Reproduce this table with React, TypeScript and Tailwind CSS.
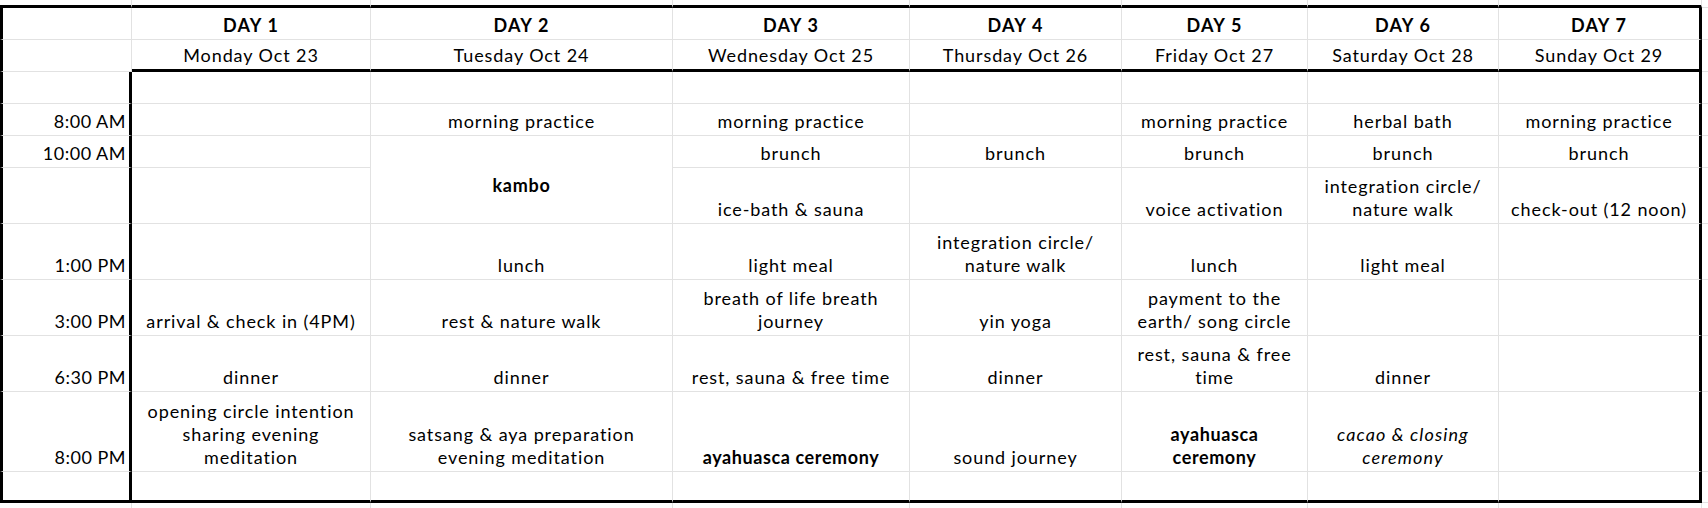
import React from 'react';

type Entry = { lines: string[]; look?: 'bold' | 'italic'; span?: boolean } | null | 'covered';

const days = [
    ['DAY 1', 'Monday Oct 23'],
    ['DAY 2', 'Tuesday Oct 24'],
    ['DAY 3', 'Wednesday Oct 25'],
    ['DAY 4', 'Thursday Oct 26'],
    ['DAY 5', 'Friday Oct 27'],
    ['DAY 6', 'Saturday Oct 28'],
    ['DAY 7', 'Sunday Oct 29'],
];

const t = (...lines: string[]): Entry => ({ lines });
const b = (...lines: string[]): Entry => ({ lines, look: 'bold' });
const i = (...lines: string[]): Entry => ({ lines, look: 'italic' });

// schedule rows below the header, time label first
const schedule: { time: string; cells: Entry[] }[] = [
    { time: '', cells: [null, null, null, null, null, null, null] },
    { time: '8:00 AM', cells: [null, t('morning practice'), t('morning practice'), null, t('morning practice'), t('herbal bath'), t('morning practice')] },
    { time: '10:00 AM', cells: [null, { lines: ['kambo'], look: 'bold', span: true }, t('brunch'), t('brunch'), t('brunch'), t('brunch'), t('brunch')] },
    { time: '', cells: [null, 'covered', t('ice-bath & sauna'), null, t('voice activation'), t('integration circle/', 'nature walk'), t('check-out (12 noon)')] },
    { time: '1:00 PM', cells: [null, t('lunch'), t('light meal'), t('integration circle/', 'nature walk'), t('lunch'), t('light meal'), null] },
    { time: '3:00 PM', cells: [t('arrival & check in (4PM)'), t('rest & nature walk'), t('breath of life breath', 'journey'), t('yin yoga'), t('payment to the', 'earth/ song circle'), null, null] },
    { time: '6:30 PM', cells: [t('dinner'), t('dinner'), t('rest, sauna & free time'), t('dinner'), t('rest, sauna & free', 'time'), t('dinner'), null] },
    { time: '8:00 PM', cells: [t('opening circle intention', 'sharing evening', 'meditation'), t('satsang & aya preparation', 'evening meditation'), b('ayahuasca ceremony'), t('sound journey'), b('ayahuasca', 'ceremony'), i('cacao & closing', 'ceremony'), null] },
    { time: '', cells: [null, null, null, null, null, null, null] },
];

const LAST_ROW = schedule.length + 2; // index of the final bordered row (rows: 0 top strip, 1-2 header)

const borders = (r: number, c: number) => {
    const parts: string[] = [];
    const total = LAST_ROW + 1; // tail strip index
    // right edge
    if (c === 8) {
        // no right border on the tail column
    } else if (r >= 1 && r <= LAST_ROW && ((c === 0 && r >= 3) || c === 7)) {
        parts.push('border-r-[3px] border-r-black');
    } else {
        parts.push('border-r border-r-[#e2e2e2]');
    }
    // bottom edge
    if (r === total) {
        // tail strip
    } else if (c <= 7 && (r === 0 || r === LAST_ROW || (r === 2 && c >= 1))) {
        parts.push('border-b-[3px] border-b-black');
    } else {
        parts.push('border-b border-b-[#e2e2e2]');
    }
    // left edge
    if (c === 0 && r >= 1 && r <= LAST_ROW) parts.push('border-l-[3px] border-l-black');
    return parts.join(' ');
};

const Lines = ({ lines }: { lines: string[] }) => (
    <>
        {lines.map(l => (
            <span key={l} className="block whitespace-nowrap">{l}</span>
        ))}
    </>
);

export default function App() {
    const cells: React.ReactNode[] = [];
    const total = LAST_ROW + 1;

    for (let r = 0; r <= total; r++) {
        for (let c = 0; c <= 8; c++) {
            const key = `${r}-${c}`;
            const base = `flex flex-col justify-end pb-[2px] ${borders(r, c)}`;

            if (r === 0 || r === total || c === 8) {
                cells.push(<div key={key} className={borders(r, c)} />);
                continue;
            }

            if (r === 1 || r === 2) {
                const label = c === 0 ? '' : days[c - 1][r - 1];
                cells.push(
                    <div key={key} className={`${base} text-center ${r === 1 ? 'font-bold tracking-[1.2px]' : ''}`}>
                        {label && <span className="whitespace-nowrap">{label}</span>}
                    </div>
                );
                continue;
            }

            const row = schedule[r - 3];
            if (c === 0) {
                cells.push(
                    <div key={key} className={`${base} text-right pr-[3px] tracking-[0.5px]`}>
                        {row.time && <span className="whitespace-nowrap">{row.time}</span>}
                    </div>
                );
                continue;
            }

            const entry = row.cells[c - 1];
            if (entry === 'covered') continue;
            if (entry && entry.span) {
                cells.push(
                    <div key={key} className={`row-span-2 flex flex-col justify-center pt-[11px] text-center font-bold tracking-[0.7px] ${borders(r + 1, c)}`}>
                        <Lines lines={entry.lines} />
                    </div>
                );
                continue;
            }
            const look = entry?.look === 'bold' ? 'font-bold tracking-[0.6px]' : entry?.look === 'italic' ? 'italic tracking-[1.1px]' : '';
            cells.push(
                <div key={key} className={`${base} text-center ${look}`}>
                    {entry && <Lines lines={entry.lines} />}
                </div>
            );
        }
    }

    return (
        <div className="w-[1708px] h-[508px] overflow-hidden bg-white text-black font-['Lato','Liberation_Sans',sans-serif] text-[18px] leading-[23px] tracking-[0.9px]">
            <div className="grid grid-cols-[132px_239px_302px_237px_212px_186px_191px_203px_6px] grid-rows-[8px_32px_32px_32px_32px_32px_56px_56px_56px_56px_80px_31px_5px]">
                {cells}
            </div>
        </div>
    );
}
